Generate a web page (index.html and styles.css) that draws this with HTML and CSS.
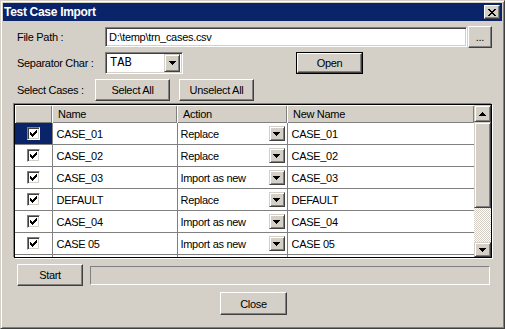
FILE: index.html
```html
<!DOCTYPE html>
<html lang="en">
<head>
    <meta charset="UTF-8">
    <title>Test Case Import</title>
    <link rel="stylesheet" href="styles.css">
</head>
<body>
    <div class="window">
        <div class="titlebar">
            <span class="title">Test Case Import</span>
            <span class="close-btn">
                <svg width="8" height="7" viewBox="0 0 8 7"><path d="M0 0h2v1h1v1h2v-1h1v-1h2v1h-1v1h-1v1h-1v1h1v1h1v1h1v1h-2v-1h-1v-1h-2v1h-1v1h-2v-1h1v-1h1v-1h1v-1h-1v-1h-1v-1h-1z"/></svg>
            </span>
        </div>
        <div class="content">
            <div class="row">
                <span class="label">File Path :</span>
                <div class="field sunken">D:\temp\trn_cases.csv</div>
                <button class="btn browse">...</button>
            </div>
            <div class="row row-sep">
                <span class="label">Separator Char :</span>
                <div class="combo sunken">
                    <span class="combo-text">TAB</span>
                    <span class="combo-btn">
                        <svg width="7" height="4" viewBox="0 0 7 4"><path d="M0 0h7v1h-1v1h-1v1h-1v1h-1v-1h-1v-1h-1v-1h-1z"/></svg>
                    </span>
                </div>
                <button class="btn default open">Open</button>
            </div>
            <div class="row row-select">
                <span class="label short">Select Cases :</span>
                <button class="btn select-all">Select All</button>
                <button class="btn unselect-all">Unselect All</button>
            </div>

            <div class="grid">
                <div class="grid-body">
                    <table class="cases">
                        <colgroup>
                            <col class="c-check">
                            <col class="c-name">
                            <col class="c-action">
                            <col class="c-new">
                        </colgroup>
                        <thead>
                            <tr>
                                <th></th>
                                <th>Name</th>
                                <th>Action</th>
                                <th>New Name</th>
                            </tr>
                        </thead>
                        <tbody id="caseRows"></tbody>
                    </table>
                </div>
                <div class="scrollbar">
                    <span class="sb-btn sb-up">
                        <svg width="7" height="4" viewBox="0 0 7 4"><path d="M3 0h1v1h1v1h1v1h1v1h-7v-1h1v-1h1v-1h1z"/></svg>
                    </span>
                    <span class="sb-thumb"></span>
                    <span class="sb-track"></span>
                    <span class="sb-btn sb-down">
                        <svg width="7" height="4" viewBox="0 0 7 4"><path d="M0 0h7v1h-1v1h-1v1h-1v1h-1v-1h-1v-1h-1v-1h-1z"/></svg>
                    </span>
                </div>
            </div>

            <div class="row row-start">
                <button class="btn start">Start</button>
                <div class="progress"></div>
            </div>
            <div class="row row-close">
                <button class="btn close">Close</button>
            </div>
        </div>
    </div>

    <script>
        const cases = [
            { name: 'CASE_01', action: 'Replace', newName: 'CASE_01' },
            { name: 'CASE_02', action: 'Replace', newName: 'CASE_02' },
            { name: 'CASE_03', action: 'Import as new', newName: 'CASE_03' },
            { name: 'DEFAULT', action: 'Replace', newName: 'DEFAULT' },
            { name: 'CASE_04', action: 'Import as new', newName: 'CASE_04' },
            { name: 'CASE 05', action: 'Import as new', newName: 'CASE 05' }
        ];

        const checkSvg = '<svg width="7" height="7" viewBox="0 0 7 7"><path d="M0 2h1v3h-1zM1 3h1v3h-1zM2 4h1v3h-1zM3 3h1v3h-1zM4 2h1v3h-1zM5 1h1v3h-1zM6 0h1v3h-1z"/></svg>';
        const arrowSvg = '<svg width="7" height="4" viewBox="0 0 7 4"><path d="M0 0h7v1h-1v1h-1v1h-1v1h-1v-1h-1v-1h-1v-1h-1z"/></svg>';

        // fill the grid rows
        const tbody = document.getElementById('caseRows');
        cases.forEach((c, i) => {
            const row = tbody.insertRow();
            const check = row.insertCell(0);
            check.className = 'cell-check' + (i === 0 ? ' selected' : '');
            check.innerHTML = '<span class="checkbox">' + checkSvg + '</span>';

            row.insertCell(1).textContent = c.name;

            const action = row.insertCell(2);
            action.className = 'cell-action';
            action.innerHTML = '<span class="action-text"></span><span class="drop-btn">' + arrowSvg + '</span>';
            action.querySelector('.action-text').textContent = c.action;

            row.insertCell(3).textContent = c.newName;
        });

        // next row is only peeking out under the last visible one
        const tail = tbody.insertRow();
        for (let k = 0; k < 4; k++) tail.insertCell(k);
    </script>
</body>
</html>
```

FILE: styles.css
```css
body {
    margin: 0;
    background-color: #d4d0c8;
    font-family: "Liberation Sans", Arial, sans-serif;
    font-size: 11px;
    letter-spacing: -0.3px;
    color: #000;
}

.window {
    width: 505px;
    height: 329px;
    box-sizing: border-box;
    padding: 2px;
    background-color: #d4d0c8;
    border: 1px solid;
    border-color: #d4d0c8 #404040 #404040 #d4d0c8;
    box-shadow: inset 1px 1px #fff, inset -1px -1px #808080;
}

.titlebar {
    height: 18px;
    background-color: #0a246a;
    color: #fff;
    display: flex;
    align-items: center;
    justify-content: space-between;
    padding: 0 2px 0 1px;
}

.title {
    font-weight: bold;
    font-size: 12px;
    line-height: 18px;
}

.close-btn {
    width: 14px;
    height: 12px;
    background-color: #d4d0c8;
    border: 1px solid;
    border-color: #fff #404040 #404040 #fff;
    box-shadow: inset -1px -1px #808080;
    display: flex;
    align-items: center;
    justify-content: center;
}

.content {
    padding: 5px 10px 0 14px;
}

.row {
    display: flex;
    align-items: center;
    height: 22px;
}

.label {
    width: 88px;
    flex-shrink: 0;
    white-space: nowrap;
}

.label.short {
    width: 78px;
}

.sunken {
    box-sizing: border-box;
    background-color: #fff;
    border: 1px solid;
    border-color: #808080 #fff #fff #808080;
    box-shadow: inset 1px 1px #404040, inset -1px -1px #d4d0c8;
}

.field {
    flex: 1;
    height: 20px;
    line-height: 18px;
    padding-left: 3px;
}

.btn {
    box-sizing: border-box;
    height: 22px;
    padding: 0;
    font: inherit;
    letter-spacing: inherit;
    color: #000;
    background-color: #d4d0c8;
    border: 1px solid;
    border-color: #fff #404040 #404040 #fff;
    box-shadow: inset -1px -1px #808080;
}

.btn.default {
    outline: 1px solid #000;
    outline-offset: 0;
}

.browse {
    width: 24px;
    margin-left: 1px;
}

.row-sep {
    margin-top: 4px;
}

.combo {
    width: 78px;
    height: 22px;
    display: flex;
    align-items: center;
    padding: 2px;
}

.combo-text {
    flex: 1;
    font-family: "Liberation Mono", "Courier New", monospace;
    font-size: 12px;
    letter-spacing: 0;
    padding-left: 2px;
}

.combo-btn, .drop-btn, .sb-btn {
    box-sizing: border-box;
    background-color: #d4d0c8;
    border: 1px solid;
    border-color: #d4d0c8 #404040 #404040 #d4d0c8;
    box-shadow: inset 1px 1px #fff, inset -1px -1px #808080;
    display: flex;
    align-items: center;
    justify-content: center;
}

.combo-btn {
    width: 16px;
    height: 18px;
}

.open {
    width: 65px;
    height: 20px;
    margin-left: 114px;
}

.row-select {
    margin-top: 5px;
}

.select-all, .unselect-all {
    width: 75px;
}

.unselect-all {
    margin-left: 9px;
}

.grid {
    margin: 3px 0 0 -3px;
    width: 478px;
    height: 154px;
    box-sizing: border-box;
    border: 1px solid #000;
    box-shadow: -1px -1px 0 #808080, 1px 1px 0 #fff;
    background-color: #fff;
    display: flex;
}

.grid-body {
    width: 459px;
    overflow: hidden;
}

.cases {
    width: 459px;
    table-layout: fixed;
    border-collapse: collapse;
}

.c-check { width: 37px; }
.c-name { width: 125px; }
.c-action { width: 110px; }
.c-new { width: 187px; }

.cases th {
    height: 18px;
    box-sizing: border-box;
    padding: 0 0 0 6px;
    text-align: left;
    font-weight: normal;
    background-color: #d4d0c8;
    box-shadow: inset 1px 1px #fff, inset -1px -1px #808080;
}

.cases td {
    height: 21px;
    padding: 0 0 0 4px;
    border-right: 1px solid #808080;
    border-bottom: 1px solid #808080;
    white-space: nowrap;
}

.cases td.cell-check {
    padding: 0;
}

.cell-check.selected {
    background-color: #0a246a;
}

.checkbox {
    box-sizing: border-box;
    width: 13px;
    height: 13px;
    margin-left: 12px;
    background-color: #fff;
    border: 1px solid;
    border-color: #808080 #fff #fff #808080;
    box-shadow: inset 1px 1px #404040, inset -1px -1px #d4d0c8;
    display: flex;
    align-items: center;
    justify-content: center;
}

.cases td.cell-action {
    padding: 0 2px 0 3px;
}

.cell-action {
    position: relative;
}

.drop-btn {
    position: absolute;
    right: 2px;
    top: 3px;
    width: 16px;
    height: 15px;
}

.scrollbar {
    width: 17px;
    display: flex;
    flex-direction: column;
}

.sb-up {
    height: 17px;
}

.sb-thumb {
    height: 86px;
    box-sizing: border-box;
    background-color: #d4d0c8;
    border: 1px solid;
    border-color: #d4d0c8 #404040 #404040 #d4d0c8;
    box-shadow: inset 1px 1px #fff, inset -1px -1px #808080;
}

.sb-track {
    height: 34px;
    background: repeating-conic-gradient(#fff 0 25%, #d4d0c8 0 50%) 0 0 / 2px 2px;
}

.sb-down {
    height: 15px;
}

.row-start {
    margin-top: 6px;
}

.start {
    width: 66px;
}

.progress {
    width: 400px;
    height: 19px;
    margin-left: 7px;
    box-sizing: border-box;
    border: 1px solid;
    border-color: #808080 #fff #fff #808080;
}

.row-close {
    margin-top: 6px;
    height: 23px;
}

.close {
    width: 67px;
    height: 23px;
    margin-left: 203px;
}
```
